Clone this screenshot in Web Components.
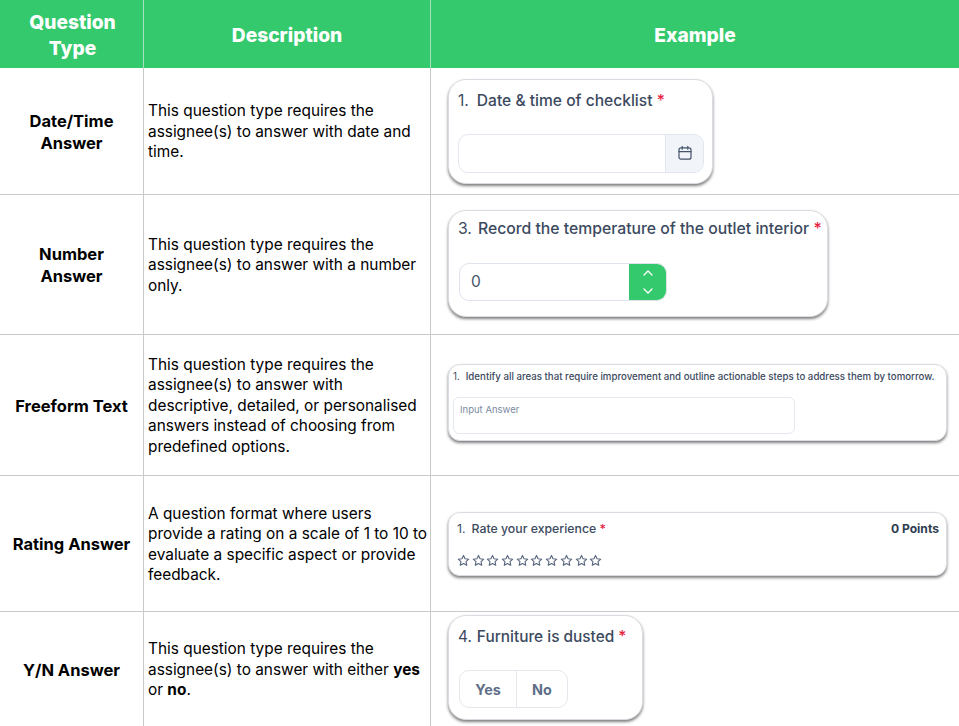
<!DOCTYPE html>
<html>
<head>
<meta charset="utf-8">
<title>Question types</title>
<style>
  html, body { margin: 0; background: #fff; }
  body { font-family: "Inter", "Open Sans", sans-serif; overflow: hidden; }
  b { font-weight: 700; }
</style>
</head>
<body>
<question-table>
  <table-row header height="68">
    <span slot="type">Question<br>Type</span>
    <span slot="desc">Description</span>
    <span slot="example">Example</span>
  </table-row>

  <table-row height="127">
    <span slot="type">Date/Time<br>Answer</span>
    <span slot="desc">This question type requires the<br>assignee(s) to answer with date and<br>time.</span>
    <question-card slot="example" width="265" height="105" radius="18">
      <card-title num="1." size="15.6" gap="8" top="11">Date &amp; time of checklist <i>*</i></card-title>
      <date-input></date-input>
    </question-card>
  </table-row>

  <table-row height="140">
    <span slot="type">Number<br>Answer</span>
    <span slot="desc">This question type requires the<br>assignee(s) to answer with a number<br>only.</span>
    <question-card slot="example" width="380" height="107" radius="18" lift="2">
      <card-title num="3." size="15.75" gap="6" top="8">Record the temperature of the outlet interior <i>*</i></card-title>
      <number-input></number-input>
    </question-card>
  </table-row>

  <table-row height="141">
    <span slot="type">Freeform Text</span>
    <span slot="desc">This question type requires the<br>assignee(s) to answer with<br>descriptive, detailed, or personalised<br>answers instead of choosing from<br>predefined options.</span>
    <question-card slot="example" width="499" height="77" radius="12" lift="5">
      <card-title num="1." size="9.7" gap="6" top="4" compact>Identify all areas that require improvement and outline actionable steps to address them by tomorrow.</card-title>
      <text-answer>Input Answer</text-answer>
    </question-card>
  </table-row>

  <table-row height="136">
    <span slot="type">Rating Answer</span>
    <span slot="desc">A question format where users<br>provide a rating on a scale of 1 to 10 to<br>evaluate a specific aspect or provide<br>feedback.</span>
    <question-card slot="example" width="499" height="64" radius="12">
      <rating-answer></rating-answer>
    </question-card>
  </table-row>

  <table-row height="114" last>
    <span slot="type">Y/N Answer</span>
    <span slot="desc">This question type requires the<br>assignee(s) to answer with either <b>yes</b><br>or <b>no</b>.</span>
    <question-card slot="example" width="195" height="105" radius="18" lift="3">
      <card-title num="4." size="15.4" gap="5" top="11">Furniture is dusted <i>*</i></card-title>
      <yes-no></yes-no>
    </question-card>
  </table-row>
</question-table>

<script>
class QuestionTable extends HTMLElement {
  constructor() {
    super();
    this.attachShadow({ mode: "open" });
    this.shadowRoot.innerHTML = `
      <style>
        :host { display: flex; flex-direction: column; width: 959px; height: 726px; overflow: hidden; }
      </style>
      <slot></slot>`;
  }
}

class TableRow extends HTMLElement {
  constructor() {
    super();
    this.attachShadow({ mode: "open" });
    this.shadowRoot.innerHTML = `
      <style>
        :host {
          display: grid;
          grid-template-columns: 144px 287px 528px;
          flex: none;
          box-sizing: border-box;
          border-bottom: 1px solid #c9c9c9;
          color: #000;
        }
        :host([header]) { background: #34c96c; color: #fff; border-bottom: 0; }
        :host([last]) { border-bottom: 0; }
        .cell { display: flex; align-items: center; box-sizing: border-box; border-right: 1px solid #c9c9c9; min-width: 0; }
        .type { justify-content: center; text-align: center; font-size: 16.5px; font-weight: 700; line-height: 22px; padding: 1px 0 0; white-space: nowrap; }
        .desc { padding: 2px 0 0 4px; font-size: 15.4px; line-height: 20.5px; white-space: nowrap; }
        .example { padding-left: 17px; border-right: 0; }
        :host([header]) .cell { justify-content: center; text-align: center; font-size: 19.2px; font-weight: 800; line-height: 26px; padding: 1px 0 0; border-right-color: #a9dfbd; }
        :host([header]) .type { padding-left: 2px; }
      </style>
      <div class="cell type"><div><slot name="type"></slot></div></div>
      <div class="cell desc"><div><slot name="desc"></slot></div></div>
      <div class="cell example"><slot name="example"></slot></div>`;
  }
  connectedCallback() {
    this.style.height = this.getAttribute("height") + "px";
  }
}

class QuestionCard extends HTMLElement {
  constructor() {
    super();
    this.attachShadow({ mode: "open" });
    this.shadowRoot.innerHTML = `
      <style>
        :host {
          display: flex;
          flex-direction: column;
          justify-content: space-between;
          box-sizing: border-box;
          background: #fff;
          border: 1px solid #d9dde3;
          box-shadow: 0 2px 3px 0 rgba(0,0,0,.5);
          color: #3c4a60;
        }
      </style>
      <slot></slot>`;
  }
  connectedCallback() {
    this.style.width = this.getAttribute("width") + "px";
    this.style.height = this.getAttribute("height") + "px";
    this.style.borderRadius = this.getAttribute("radius") + "px";
    if (this.hasAttribute("lift")) this.style.marginTop = -this.getAttribute("lift") + "px";
  }
}

class CardTitle extends HTMLElement {
  constructor() {
    super();
    this.attachShadow({ mode: "open" });
    this.shadowRoot.innerHTML = `
      <style>
        :host { display: flex; font-weight: 500; white-space: nowrap; padding: 11px 0 0 9px; line-height: 20px; }
        :host([compact]) { padding-left: 4px; line-height: 16px; }
        ::slotted(i) { color: #e5233f; font-style: normal; }
        .num { font-weight: 400; }
      </style>
      <span class="num"></span><span><slot></slot></span>`;
  }
  connectedCallback() {
    this.style.fontSize = this.getAttribute("size") + "px";
    this.style.paddingTop = this.getAttribute("top") + "px";
    const num = this.shadowRoot.querySelector(".num");
    num.textContent = this.getAttribute("num");
    num.style.marginRight = this.getAttribute("gap") + "px";
  }
}

class DateInput extends HTMLElement {
  constructor() {
    super();
    this.attachShadow({ mode: "open" });
    this.shadowRoot.innerHTML = `
      <style>
        :host { display: flex; box-sizing: border-box; height: 39px; margin: 0 8px 10px 9px; border: 1px solid #e2e6ee; border-radius: 10px; overflow: hidden; }
        .field { flex: 1; }
        .btn { width: 37px; display: flex; align-items: center; justify-content: center; background: #f1f4f9; border-left: 1px solid #e2e6ee; }
      </style>
      <div class="field"></div>
      <div class="btn">
        <svg width="16" height="16" viewBox="0 0 16 16" fill="none" stroke="#44536a" stroke-width="1.2" stroke-linecap="round" stroke-linejoin="round">
          <rect x="2" y="2.8" width="12" height="11.4" rx="2"/>
          <path d="M2 6.6h12M5.2 1.4v2.8M10.8 1.4v2.8"/>
        </svg>
      </div>`;
  }
}

class NumberInput extends HTMLElement {
  constructor() {
    super();
    this.attachShadow({ mode: "open" });
    this.shadowRoot.innerHTML = `
      <style>
        :host { display: flex; box-sizing: border-box; width: 208px; height: 38px; margin: 0 0 15px 10px; border: 1px solid #dfe3ec; border-radius: 10px; overflow: hidden; }
        .field { flex: 1; padding-left: 11px; font-size: 15.5px; line-height: 36px; color: #44536a; }
        .spin { width: 38px; margin: -1px; background: #34c96c; display: flex; flex-direction: column; align-items: center; justify-content: center; gap: 12px; }
      </style>
      <div class="field">0</div>
      <div class="spin">
        <svg width="10" height="6" viewBox="0 0 10 6" fill="none" stroke="#fff" stroke-width="1.3" stroke-linecap="round" stroke-linejoin="round"><path d="M1 5l4-4 4 4"/></svg>
        <svg width="10" height="6" viewBox="0 0 10 6" fill="none" stroke="#fff" stroke-width="1.3" stroke-linecap="round" stroke-linejoin="round"><path d="M1 1l4 4 4-4"/></svg>
      </div>`;
  }
}

class TextAnswer extends HTMLElement {
  constructor() {
    super();
    this.attachShadow({ mode: "open" });
    this.shadowRoot.innerHTML = `
      <style>
        :host { display: block; box-sizing: border-box; width: 342px; height: 37px; margin: 0 0 6px 4px; padding: 5px 6px; border: 1px solid #e4e8ef; border-radius: 6px; font-size: 9.5px; line-height: 13px; color: #7d8aa0; }
      </style>
      <slot></slot>`;
  }
}

class RatingAnswer extends HTMLElement {
  constructor() {
    super();
    this.attachShadow({ mode: "open" });
    const star = `<svg width="13" height="13" viewBox="0 0 24 24" fill="none" stroke="#56647c" stroke-width="2" stroke-linejoin="round"><path d="M12 2.6l2.9 6.2 6.8.8-5 4.6 1.3 6.7-6-3.3-6 3.3 1.3-6.7-5-4.6 6.8-.8z"/></svg>`;
    this.shadowRoot.innerHTML = `
      <style>
        :host { display: flex; flex-direction: column; justify-content: space-between; height: 100%; box-sizing: border-box; padding: 8px 7px 8px 8px; }
        .top { display: flex; justify-content: space-between; font-size: 12.3px; line-height: 16px; font-weight: 500; }
        .num { font-weight: 400; margin-right: 6px; }
        i { color: #e5233f; font-style: normal; }
        b { font-weight: 700; color: #2f3c50; font-size: 12.1px; }
        .stars { display: flex; gap: 1.7px; line-height: 0; }
      </style>
      <div class="top"><span><span class="num">1.</span>Rate your experience <i>*</i></span><b>0 Points</b></div>
      <div class="stars">${star.repeat(10)}</div>`;
  }
}

class YesNo extends HTMLElement {
  constructor() {
    super();
    this.attachShadow({ mode: "open" });
    this.shadowRoot.innerHTML = `
      <style>
        :host { display: flex; box-sizing: border-box; width: 109px; height: 38px; margin: 0 0 11px 10px; border: 1px solid #e4e7ec; border-radius: 10px; font-size: 14.4px; font-weight: 700; color: #5f6f88; }
        div { display: flex; align-items: center; justify-content: center; box-sizing: border-box; }
        .yes { width: 57px; border-right: 1px solid #e4e7ec; }
        .no { flex: 1; }
      </style>
      <div class="yes">Yes</div><div class="no">No</div>`;
  }
}

customElements.define("question-table", QuestionTable);
customElements.define("table-row", TableRow);
customElements.define("question-card", QuestionCard);
customElements.define("card-title", CardTitle);
customElements.define("date-input", DateInput);
customElements.define("number-input", NumberInput);
customElements.define("text-answer", TextAnswer);
customElements.define("rating-answer", RatingAnswer);
customElements.define("yes-no", YesNo);
</script>
</body>
</html>
